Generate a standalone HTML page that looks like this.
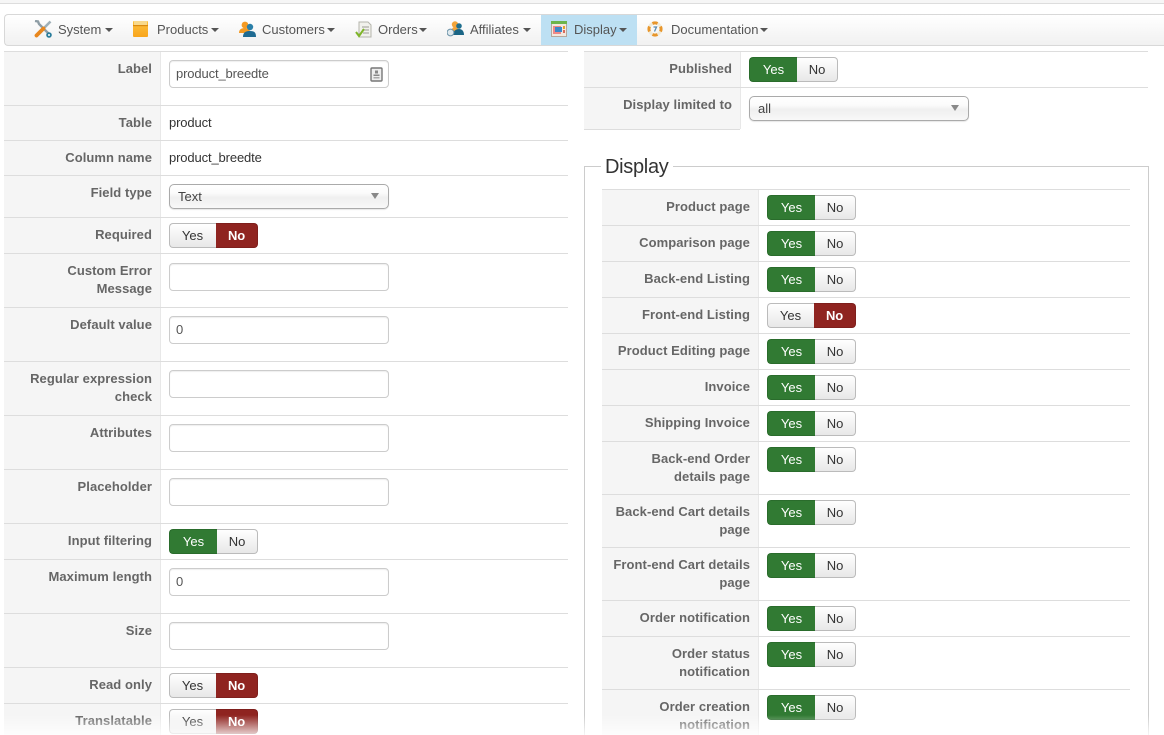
<!DOCTYPE html>
<html><head><meta charset="utf-8"><style>
html,body{margin:0;padding:0;background:#fff;width:1164px;height:735px;overflow:hidden}
body{position:relative;font:13px/18px "Liberation Sans",Arial,sans-serif;color:#333}
div,span,svg{position:absolute;box-sizing:border-box}
.hl{height:1px;background:#ddd}
.bg{background:#f5f5f5}
.l{font-weight:bold;color:#666;text-align:right;letter-spacing:.07px;margin-top:1px}
.a{left:4px;width:148px}.b{left:584px;width:148px}.c{left:602px;width:148px}
.t{white-space:nowrap;letter-spacing:-.13px;margin-top:1px}
.tg{width:89px;height:25px;font-size:13px;line-height:24px;text-align:center}
.y,.n{top:0;height:25px;border:1px solid #bbb}
.y{left:0;width:48px;border-radius:4px 0 0 4px;background:linear-gradient(#fff,#e8e8e8);color:#333;border-right:0;padding-right:2px}
.n{left:48px;width:41px;border-radius:0 4px 4px 0;background:linear-gradient(#fff,#e8e8e8);color:#333;border-left:0}
.y.on{background:#317a33;color:#fff;border-color:#2a6c2c;padding-right:0}
.n.on{left:47px;width:42px;background:#8f2420;color:#fff;border-color:#7e1f1c;font-weight:bold;letter-spacing:-.2px}
.i{left:169px;width:220px;height:28px;border:1px solid #ccc;border-radius:4px;background:#fff;box-shadow:inset 0 1px 1px rgba(0,0,0,.07);padding:4px 6px;color:#555;line-height:18px;letter-spacing:-.13px}
.s{height:25px;width:220px;border:1px solid #aaa;border-radius:5px;background:linear-gradient(#fff 0,#fbfbfb 35%,#efefef 55%,#f8f8f8 100%);box-shadow:0 1px 1px rgba(0,0,0,.1);padding:3px 8px;color:#444;line-height:18px}
.s i{position:absolute;right:9px;top:8px;width:0;height:0;border:4px solid transparent;border-top:6px solid #888;border-bottom:0}
.m{top:21px;color:#555;white-space:nowrap}
.cr{top:28px;width:0;height:0;border:4px solid transparent;border-top:4px solid #555;border-bottom:0}
</style></head><body>
<div style="left:0;top:0;width:1164px;height:3px;background:#f6f6f6"></div>
<div style="left:0;top:3px;width:1164px;height:1px;background:#ddd"></div>

<div style="left:4px;top:14px;width:1164px;height:32px;border:1px solid #d8d8d8;border-right:0;border-radius:4px;background:linear-gradient(#fff,#f1f1f1)"></div>
<div style="left:541px;top:15px;width:96px;height:30px;background:#bde0f3"></div>

<svg style="left:34px;top:20px" width="18" height="18" viewBox="0 0 18 18"><path d="M1 1l3 .5 1 2.500L16.500 15.500" stroke="#8e9da5" stroke-width="2.400" fill="none"/><path d="M16.500 1.500L10 8" stroke="#9fb0b8" stroke-width="2.600" fill="none"/><path d="M9.500 8.500L2.500 15.500" stroke="#e8871e" stroke-width="3.800" stroke-linecap="round"/><circle cx="15" cy="15" r="2.800" fill="#2a7d9c"/><circle cx="15" cy="15" r="1" fill="#fff"/></svg>
<span class="m" style="left:58px">System</span><span class="cr" style="left:105px"></span>

<svg style="left:133px;top:21px" width="15" height="16" viewBox="0 0 15 16"><defs><linearGradient id="pg" x1="0" y1="0" x2="0" y2="1"><stop offset="0" stop-color="#fcc23f"/><stop offset="1" stop-color="#f9a51c"/></linearGradient></defs><rect x="0" y="0" width="15" height="16" rx="1" fill="url(#pg)"/><rect x="1" y="0" width="13" height="4" fill="#f8d98c"/><rect x="0" y="4" width="15" height="1.200" fill="#d98a10"/></svg>
<span class="m" style="left:157px">Products</span><span class="cr" style="left:211px"></span>

<svg style="left:239px;top:21px" width="17" height="16" viewBox="0 0 17 16"><circle cx="6" cy="4" r="3.400" fill="#f49a22"/><path d="M0 12c0-4 3-5 6-5s5 1 5 5z" fill="#f49a22"/><circle cx="11" cy="6" r="3.200" fill="#2a7fa8"/><path d="M4 16c0-5 3-6 7-6s6 1 6 6z" fill="#1f6b92"/></svg>
<span class="m" style="left:262px">Customers</span><span class="cr" style="left:327px"></span>

<svg style="left:355px;top:21px" width="17" height="17" viewBox="0 0 17 17"><path d="M4 1h9l3 3v12H4z" fill="#f1f1ec" stroke="#b5b5ac"/><path d="M7 6h7M7 9h7M8 12h6" stroke="#9a9a92"/><path d="M1 11l3 4 5-7" stroke="#7fb52a" stroke-width="2" fill="none"/></svg>
<span class="m" style="left:378px">Orders</span><span class="cr" style="left:419px"></span>

<svg style="left:447px;top:21px" width="17" height="16" viewBox="0 0 17 16"><circle cx="8" cy="3.500" r="3.200" fill="#f3a43a"/><path d="M5 13V9c0-2 1-3 3-3s3 1 3 3v4z" fill="#f3a43a"/><circle cx="12" cy="5" r="2.800" fill="#1f6f8f"/><path d="M6 14c0-4 3-6 6-6s5 2 5 6z" fill="#1a6585"/><circle cx="3.500" cy="11.500" r="3.400" fill="#dfe9ee" stroke="#6d93a8"/></svg>
<span class="m" style="left:470px">Affiliates</span><span class="cr" style="left:523px"></span>

<svg style="left:551px;top:21px" width="16" height="16" viewBox="0 0 16 16"><rect x=".5" y=".5" width="15" height="15" fill="#f3e7de" stroke="#b5a79c"/><rect x="0" y="0" width="16" height="3" fill="#6cb44c"/><rect x="2" y="5" width="8" height="8" fill="#e88"/><rect x="4" y="6" width="7" height="5" fill="#3d87c7"/><rect x="12" y="5" width="2" height="3" fill="#e3a22a"/><rect x="12" y="9" width="2" height="3" fill="#d9695c"/></svg>
<span class="m" style="left:574px">Display</span><span class="cr" style="left:619px"></span>

<svg style="left:647px;top:21px" width="16" height="16" viewBox="0 0 16 16"><circle cx="8" cy="8" r="6" fill="none" stroke="#f0ead8" stroke-width="3"/><path d="M5.500 2.500A6 6 0 0 1 10.500 2.500M13.500 5.500A6 6 0 0 1 13.500 10.500M10.500 13.500A6 6 0 0 1 5.500 13.500M2.500 10.500A6 6 0 0 1 2.500 5.500" stroke="#e8962b" stroke-width="3" fill="none"/><path d="M6.500 6h3L7.500 10.500" stroke="#5b8bb0" stroke-width="1.300" fill="none"/></svg>
<span class="m" style="left:671px">Documentation</span><span class="cr" style="left:760px"></span>

<!-- LEFT TABLE -->
<div class="bg" style="left:4px;top:51px;width:156px;height:684px"></div>
<div style="left:160px;top:51px;width:1px;height:684px;background:#e8e8e8"></div>
<div class="hl" style="left:4px;top:51px;width:564px"></div>
<div class="hl" style="left:4px;top:105px;width:564px"></div>
<div class="hl" style="left:4px;top:140px;width:564px"></div>
<div class="hl" style="left:4px;top:175px;width:564px"></div>
<div class="hl" style="left:4px;top:217px;width:564px"></div>
<div class="hl" style="left:4px;top:253px;width:564px"></div>
<div class="hl" style="left:4px;top:307px;width:564px"></div>
<div class="hl" style="left:4px;top:361px;width:564px"></div>
<div class="hl" style="left:4px;top:415px;width:564px"></div>
<div class="hl" style="left:4px;top:469px;width:564px"></div>
<div class="hl" style="left:4px;top:523px;width:564px"></div>
<div class="hl" style="left:4px;top:559px;width:564px"></div>
<div class="hl" style="left:4px;top:613px;width:564px"></div>
<div class="hl" style="left:4px;top:667px;width:564px"></div>
<div class="hl" style="left:4px;top:703px;width:564px"></div>

<div class="l a" style="top:59px">Label</div>
<div class="i" style="top:60px">product_breedte<svg style="left:200px;top:6px" width="13" height="15" viewBox="0 0 13 15"><rect x="1" y="1" width="11" height="13" rx="1" fill="#eee" stroke="#777" stroke-width="1.400"/><rect x="5" y="3.500" width="3" height="3" fill="#888"/><rect x="3.500" y="7.500" width="6" height="1.500" fill="#888"/><rect x="3.500" y="10" width="6" height="1.500" fill="#aaa"/></svg></div>
<div class="l a" style="top:113px">Table</div><div class="t" style="left:169px;top:113px">product</div>
<div class="l a" style="top:148px">Column name</div><div class="t" style="left:169px;top:148px">product_breedte</div>
<div class="l a" style="top:183px">Field type</div><div class="s" style="left:169px;top:184px">Text<i></i></div>
<div class="l a" style="top:225px">Required</div>
<div class="tg" style="left:169px;top:223px"><div class="y">Yes</div><div class="n on">No</div></div>
<div class="l a" style="top:261px">Custom Error<br>Message</div><div class="i" style="top:263px"></div>
<div class="l a" style="top:315px">Default value</div><div class="i" style="top:316px">0</div>
<div class="l a" style="top:369px">Regular expression<br>check</div><div class="i" style="top:370px"></div>
<div class="l a" style="top:423px">Attributes</div><div class="i" style="top:424px"></div>
<div class="l a" style="top:477px">Placeholder</div><div class="i" style="top:478px"></div>
<div class="l a" style="top:531px">Input filtering</div>
<div class="tg" style="left:169px;top:529px"><div class="y on">Yes</div><div class="n">No</div></div>
<div class="l a" style="top:567px">Maximum length</div><div class="i" style="top:568px">0</div>
<div class="l a" style="top:621px">Size</div><div class="i" style="top:622px"></div>
<div class="l a" style="top:675px">Read only</div>
<div class="tg" style="left:169px;top:673px"><div class="y">Yes</div><div class="n on">No</div></div>
<div class="l a" style="top:711px">Translatable</div>
<div class="tg" style="left:169px;top:709px"><div class="y">Yes</div><div class="n on">No</div></div>

<!-- RIGHT TOP -->
<div class="bg" style="left:584px;top:51px;width:156px;height:78px"></div>
<div style="left:740px;top:51px;width:1px;height:78px;background:#e8e8e8"></div>
<div class="hl" style="left:584px;top:51px;width:564px"></div>
<div class="hl" style="left:584px;top:87px;width:564px"></div>
<div class="hl" style="left:584px;top:129px;width:156px"></div>
<div class="l b" style="top:59px">Published</div>
<div class="tg" style="left:749px;top:57px"><div class="y on">Yes</div><div class="n">No</div></div>
<div class="l b" style="top:95px">Display limited to</div>
<div class="s" style="left:749px;top:96px">all<i></i></div>

<!-- FIELDSET -->
<div style="left:584px;top:166px;width:565px;height:600px;border:1px solid #ccc"></div>
<div style="left:601px;top:154px;width:72px;height:24px;background:#fff"></div>
<div style="position:absolute;white-space:nowrap;left:605px;top:155px;font-size:20px;line-height:24px;color:#333;letter-spacing:-.3px">Display</div>

<div class="bg" style="left:602px;top:189px;width:156px;height:546px"></div>
<div style="left:758px;top:189px;width:1px;height:546px;background:#e8e8e8"></div>
<div class="hl" style="left:602px;top:189px;width:528px"></div>
<div class="hl" style="left:602px;top:225px;width:528px"></div>
<div class="hl" style="left:602px;top:261px;width:528px"></div>
<div class="hl" style="left:602px;top:297px;width:528px"></div>
<div class="hl" style="left:602px;top:333px;width:528px"></div>
<div class="hl" style="left:602px;top:369px;width:528px"></div>
<div class="hl" style="left:602px;top:405px;width:528px"></div>
<div class="hl" style="left:602px;top:441px;width:528px"></div>
<div class="hl" style="left:602px;top:494px;width:528px"></div>
<div class="hl" style="left:602px;top:547px;width:528px"></div>
<div class="hl" style="left:602px;top:600px;width:528px"></div>
<div class="hl" style="left:602px;top:636px;width:528px"></div>
<div class="hl" style="left:602px;top:689px;width:528px"></div>

<div class="l c" style="top:197px">Product page</div>
<div class="tg" style="left:767px;top:195px"><div class="y on">Yes</div><div class="n">No</div></div>
<div class="l c" style="top:233px">Comparison page</div>
<div class="tg" style="left:767px;top:231px"><div class="y on">Yes</div><div class="n">No</div></div>
<div class="l c" style="top:269px">Back-end Listing</div>
<div class="tg" style="left:767px;top:267px"><div class="y on">Yes</div><div class="n">No</div></div>
<div class="l c" style="top:305px">Front-end Listing</div>
<div class="tg" style="left:767px;top:303px"><div class="y">Yes</div><div class="n on">No</div></div>
<div class="l c" style="top:341px">Product Editing page</div>
<div class="tg" style="left:767px;top:339px"><div class="y on">Yes</div><div class="n">No</div></div>
<div class="l c" style="top:377px">Invoice</div>
<div class="tg" style="left:767px;top:375px"><div class="y on">Yes</div><div class="n">No</div></div>
<div class="l c" style="top:413px">Shipping Invoice</div>
<div class="tg" style="left:767px;top:411px"><div class="y on">Yes</div><div class="n">No</div></div>
<div class="l c" style="top:449px">Back-end Order<br>details page</div>
<div class="tg" style="left:767px;top:447px"><div class="y on">Yes</div><div class="n">No</div></div>
<div class="l c" style="top:502px">Back-end Cart details<br>page</div>
<div class="tg" style="left:767px;top:500px"><div class="y on">Yes</div><div class="n">No</div></div>
<div class="l c" style="top:555px">Front-end Cart details<br>page</div>
<div class="tg" style="left:767px;top:553px"><div class="y on">Yes</div><div class="n">No</div></div>
<div class="l c" style="top:608px">Order notification</div>
<div class="tg" style="left:767px;top:606px"><div class="y on">Yes</div><div class="n">No</div></div>
<div class="l c" style="top:644px">Order status<br>notification</div>
<div class="tg" style="left:767px;top:642px"><div class="y on">Yes</div><div class="n">No</div></div>
<div class="l c" style="top:697px">Order creation<br>notification</div>
<div class="tg" style="left:767px;top:695px"><div class="y on">Yes</div><div class="n">No</div></div>

<div style="left:0;top:715px;width:1164px;height:20px;background:linear-gradient(rgba(255,255,255,0),rgba(255,255,255,.8))"></div>
</body></html>
